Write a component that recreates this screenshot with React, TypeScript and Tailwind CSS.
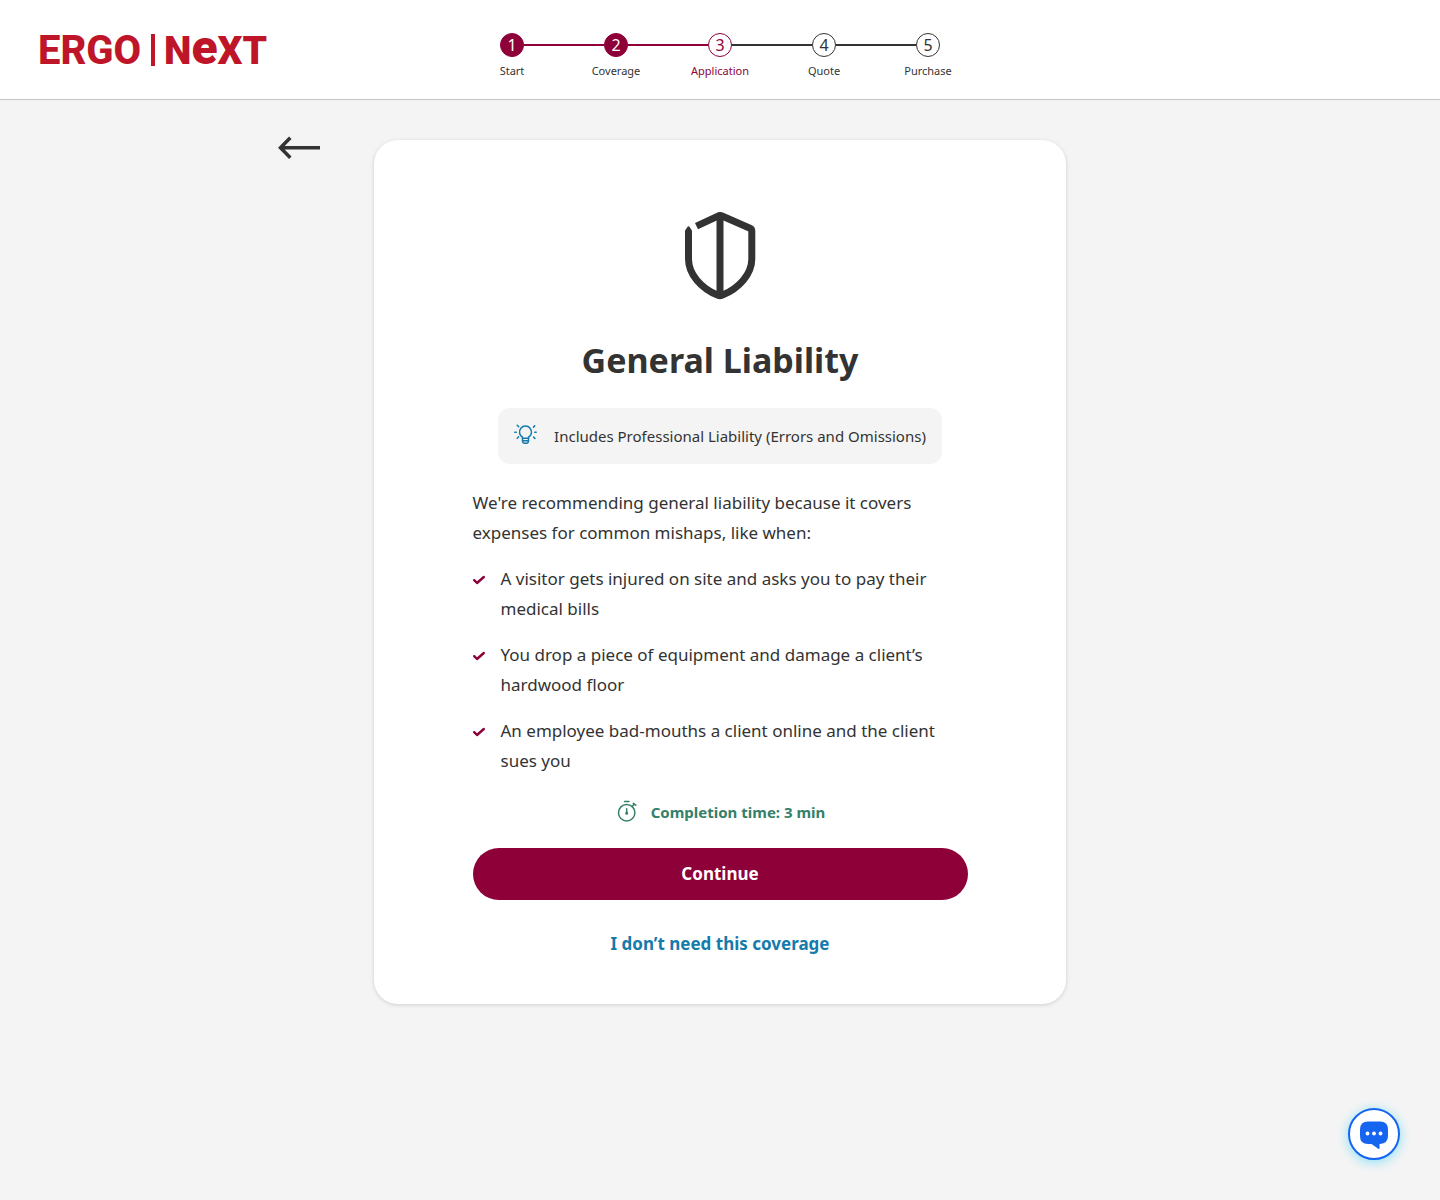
import clsx from "clsx";

const steps = ["Start", "Coverage", "Application", "Quote", "Purchase"];
const currentStep = 2;

const mishaps = [
  "A visitor gets injured on site and asks you to pay their medical bills",
  "You drop a piece of equipment and damage a client’s hardwood floor",
  "An employee bad-mouths a client online and the client sues you",
];

const Logo = () => (
  <svg
    width="240"
    height="71"
    viewBox="0 0 240 71"
    fill="#bf1528"
    fontFamily="Roboto, sans-serif"
    role="img"
    aria-label="ERGO NEXT"
  >
    <text x="2" y="50" fontWeight="800" fontSize="40">
      ERGO
    </text>
    <rect x="115" y="20" width="4" height="32" />
    <text x="128" y="50" fontWeight="900" fontSize="39">
      N<tspan fontSize="48">e</tspan>XT
    </text>
  </svg>
);

const Stepper = () => (
  <ol className="flex pt-[33px] pb-5">
    {steps.map((label, i) => {
      const done = i < currentStep;
      const active = i === currentStep;

      return (
        <li
          key={label}
          aria-current={active ? "step" : undefined}
          className="flex w-[104px] flex-col items-center"
        >
          <div className="flex w-full items-center">
            <span
              className={clsx(
                "h-0.5 flex-1",
                i === 0 ? "bg-transparent" : i <= currentStep ? "bg-[#8e0038]" : "bg-[#333333]"
              )}
            />
            <span
              className={clsx(
                "flex size-6 items-center justify-center rounded-full border text-base leading-none",
                done && "border-[#8e0038] bg-[#8e0038] text-white",
                active && "border-[#8e0038] text-[#8e0038]",
                !done && !active && "border-[#333333]"
              )}
            >
              {i + 1}
            </span>
            <span
              className={clsx(
                "h-0.5 flex-1",
                i === steps.length - 1 ? "bg-transparent" : done ? "bg-[#8e0038]" : "bg-[#333333]"
              )}
            />
          </div>
          <span className={clsx("mt-1.5 text-[11px] leading-4", active && "text-[#8e0038]")}>
            {label}
          </span>
        </li>
      );
    })}
  </ol>
);

const ShieldIcon = () => (
  <svg width="72" height="88" viewBox="0 0 72 88" fill="none" stroke="#333333" strokeWidth="7">
    <path d="M12.5 14.2 34.5 3.8Q36 3.1 37.5 3.8L66 16.3Q67.8 17.1 67.8 19V47C67.8 62 55 76.5 38 83.3Q36 84.1 34 83.3C17 76.5 4.5 62 4.5 47V20" />
    <path d="M36 4V84" />
    <path d="M1 21V18.5L3.8 14.5Q4.5 13.8 5.2 14.5L8 18.5V21Z" fill="#333333" stroke="none" />
  </svg>
);

const BulbIcon = () => (
  <svg
    width="24"
    height="24"
    viewBox="0 0 24 24"
    fill="none"
    stroke="#157bab"
    strokeWidth="1.5"
    strokeLinecap="round"
    strokeLinejoin="round"
  >
    <path d="M8.5 16.5V13.2A6 6 0 1 1 14.5 13.2V16.5" />
    <path d="M8.5 14.3H14.5M8.5 16.7H14.5M8.5 16.7Q8.7 19.3 10.5 19.3H12.5Q14.3 19.3 14.5 16.7" />
    <path d="M3.2 1.2 4.7 2.7M20.7 1.9 19.5 3.1M.8 8.3H2.3M20.7 8.3H22.2M3.2 14.2 4.6 12.9M20.9 14.4 19.5 13" />
  </svg>
);

const TimerIcon = () => (
  <svg
    width="24"
    height="24"
    viewBox="0 0 24 24"
    fill="none"
    stroke="#34806a"
    strokeWidth="1.5"
    strokeLinecap="round"
  >
    <circle cx="11.7" cy="12.7" r="8.2" />
    <path d="M9.5 1.5H14M17.3 6.3 18.9 4.6M18.3 3.3 20.8 5.2M11.7 8.7V13" />
    <circle cx="11.7" cy="13.2" r=".8" fill="#34806a" />
  </svg>
);

const CheckIcon = () => (
  <svg width="12" height="12" viewBox="0 0 12 12" fill="none" stroke="#8e0038" strokeWidth="2.4">
    <path d="M1.2 7.2 4 10 10.8 4" strokeLinecap="round" strokeLinejoin="round" />
  </svg>
);

const App = () => {
  return (
    <div className="min-h-screen bg-[#f4f4f4] font-['Noto_Sans',sans-serif] text-[#333333]">
      <header className="grid grid-cols-[1fr_auto_1fr] items-center border-b border-[#c4c4c4] bg-white px-9">
        <a href="#" aria-label="ERGO NEXT home" className="justify-self-start">
          <Logo />
        </a>
        <Stepper />
      </header>

      <main className="grid grid-cols-[1fr_minmax(0,692px)_1fr] items-start pt-10 pb-16">
        <button type="button" aria-label="Back" className="mr-[54px] -mt-1 justify-self-end">
          <svg width="42" height="24" viewBox="0 0 42 24" fill="none" stroke="#333333" strokeWidth="3.5">
            <path d="M12.3 1.7 2.5 11.7 12.3 21.7M2.5 11.7H42" />
          </svg>
        </button>

        <section className="rounded-3xl bg-white px-6 pt-[72px] pb-12 shadow-[0_1px_4px_rgba(0,0,0,0.15)]">
          <div className="mx-auto flex max-w-[495px] flex-col items-center">
            <ShieldIcon />

            <h1 className="mt-9 text-[34px] leading-[48px] font-bold">General Liability</h1>

            <div className="mt-6 flex min-h-14 items-center gap-4 rounded-xl bg-[#f4f4f4] px-4">
              <BulbIcon />
              <p className="text-[15px] leading-6">
                Includes Professional Liability (Errors and Omissions)
              </p>
            </div>

            <p className="mt-6 w-full text-[17px] leading-[30px]">
              We're recommending general liability because it covers expenses for common mishaps,
              like when:
            </p>

            <ul className="mt-4 flex w-full flex-col gap-4 text-[17px] leading-[30px]">
              {mishaps.map((mishap) => (
                <li key={mishap} className="flex gap-4">
                  <span className="flex h-[30px] shrink-0 items-center">
                    <CheckIcon />
                  </span>
                  {mishap}
                </li>
              ))}
            </ul>

            <div className="mt-6 flex items-center gap-3 text-[#34806a]">
              <TimerIcon />
              <p className="text-[15px] leading-6 font-bold">Completion time: 3 min</p>
            </div>

            <button
              type="button"
              className="mt-6 h-[52px] w-full rounded-full bg-[#8e0038] text-[17px] font-bold text-white"
            >
              Continue
            </button>

            <button type="button" className="mt-8 text-[17px] leading-6 font-bold text-[#157bab]">
              I don’t need this coverage
            </button>
          </div>
        </section>
      </main>

      <button
        type="button"
        aria-label="Open chat"
        className="fixed right-10 bottom-10 flex size-[52px] items-center justify-center rounded-full border-2 border-[#1565f0] bg-white shadow-[0_2px_12px_rgba(0,200,255,0.45)]"
      >
        <svg width="30" height="30" viewBox="0 0 30 30" fill="#1565f0">
          <path d="M9 2.5H21Q29 2.5 29 10.5V17Q29 24.5 21 25H20.5V29.5Q20.5 30.5 19.3 29.8L12.5 25H9Q1 25 1 17V10.5Q1 2.5 9 2.5Z" />
          <circle cx="8.5" cy="14.5" r="1.9" fill="white" />
          <circle cx="15" cy="14.5" r="1.9" fill="white" />
          <circle cx="21.5" cy="14.5" r="1.9" fill="white" />
        </svg>
      </button>
    </div>
  );
};

export default App;
